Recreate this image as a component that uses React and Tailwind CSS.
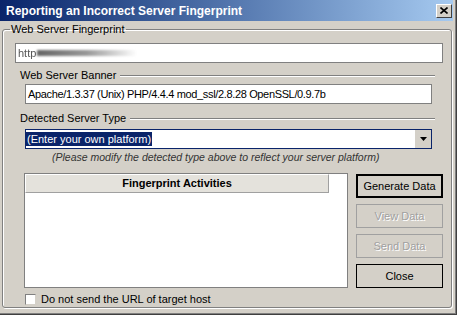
import React from 'react';

const ButtonBox = ({ children, variant = 'normal' }) => {
    const styles = {
        default: 'border-2 border-black text-black',
        normal: 'border border-black text-black',
        disabled: 'border border-[#a0a0a0] text-[#a0a0a0] [text-shadow:1px_1px_0_#fff]',
    };
    return (
        <div className={`h-[24px] w-[87px] flex items-center justify-center bg-[#d4d0c8] ${styles[variant]}`}>
            {children}
        </div>
    );
};

const SectionLabel = ({ children }) => (
    <div className="ml-[17px] w-[415px] h-[13px] flex items-center gap-[4px]">
        <span className="leading-[13px] whitespace-nowrap">{children}</span>
        <div className="flex-1 border-t border-t-[#808080] border-b border-b-white" />
    </div>
);

const App = () => {
    return (
        <div className="w-[457px] h-[315px] bg-[#d4d0c8] border-r border-b border-[#404040] overflow-hidden font-['Liberation_Sans',Arial,sans-serif] text-[11px] text-black">
            <div className="h-full border-r border-b border-[#808080] pr-[2px]">
                {/* title bar */}
                <div className="h-[21px] flex items-center justify-between bg-gradient-to-r from-[#0a246a] to-[#a6caf0]">
                    <span className="pl-[6px] text-white font-bold text-[12px] leading-[14px]">Reporting an Incorrect Server Fingerprint</span>
                    <div className="mr-[1px] w-[16px] h-[14px] bg-[#d4d0c8] border-t border-l border-white border-r border-b border-r-[#404040] border-b-[#404040] flex items-center justify-center">
                        <svg width="8" height="7" viewBox="0 0 8 7">
                            <path d="M0.5 0.5 L7.5 6.5 M7.5 0.5 L0.5 6.5" stroke="black" strokeWidth="1.6" />
                        </svg>
                    </div>
                </div>

                <fieldset className="mt-[2px] ml-[2px] w-[450px] h-[285px] border border-[#808080] rounded-[3px] shadow-[1px_1px_0_#fff,inset_1px_1px_0_#fff]">
                    <legend className="ml-[7px] px-[1px] leading-[13px] text-[11px]">Web Server Fingerprint</legend>

                    <div className="mt-[7px] ml-[12px] w-[428px] h-[20px] bg-white border border-[#808080] flex items-center pl-[2px] gap-[1px]">
                        <span className="text-[#555] blur-[0.6px] leading-[13px]">http</span>
                        <div className="w-[100px] h-[6px] bg-gradient-to-r from-[#666] via-[#999] to-transparent blur-[1px]" />
                    </div>

                    <div className="mt-[6px]">
                        <SectionLabel>Web Server Banner</SectionLabel>
                    </div>
                    <div className="mt-[2px] ml-[22px] w-[407px] h-[20px] bg-white border border-[#808080] flex items-center pl-[2px] leading-[13px] tracking-[-0.35px]">
                        Apache/1.3.37 (Unix) PHP/4.4.4 mod_ssl/2.8.28 OpenSSL/0.9.7b
                    </div>

                    <div className="mt-[8px]">
                        <SectionLabel>Detected Server Type</SectionLabel>
                    </div>
                    <div className="mt-[4px] ml-[22px] w-[407px] h-[20px] bg-white border border-[#0a246a] flex items-center justify-between">
                        <span className="bg-[#0a246a] text-white leading-[14px] px-[1px]">(Enter your own platform)</span>
                        <div className="w-[16px] h-[18px] bg-[#d4d0c8] flex items-center justify-center">
                            <svg width="7" height="4" viewBox="0 0 7 4">
                                <path d="M0 0 H7 L3.5 4 Z" fill="black" />
                            </svg>
                        </div>
                    </div>

                    <div className="mt-[2px] ml-[49px] italic text-[10.5px] leading-[13px] text-[#333] whitespace-nowrap">
                        (Please modify the detected type above to reflect your server platform)
                    </div>

                    <div className="mt-[9px] ml-[21px] flex gap-[8px]">
                        <div className="w-[324px] h-[115px] bg-white border border-[#808080]">
                            <div className="w-[304px] h-[19px] bg-[#e4e2dc] border-t border-l border-white border-r border-b border-r-[#a0a0a0] border-b-[#a0a0a0] flex items-center justify-center font-bold">
                                Fingerprint Activities
                            </div>
                        </div>
                        <div className="mt-[1px] flex flex-col gap-[6px]">
                            <ButtonBox variant="default">Generate Data</ButtonBox>
                            <ButtonBox variant="disabled">View Data</ButtonBox>
                            <ButtonBox variant="disabled">Send Data</ButtonBox>
                            <ButtonBox>Close</ButtonBox>
                        </div>
                    </div>

                    <div className="mt-[5px] ml-[22px] flex items-center gap-[5px]">
                        <div className="w-[11px] h-[11px] bg-white border border-t-[#808080] border-l-[#808080] border-r-[#d4d0c8] border-b-[#d4d0c8]" />
                        <span className="leading-[13px]">Do not send the URL of target host</span>
                    </div>
                </fieldset>
            </div>
        </div>
    );
};

export default App;
